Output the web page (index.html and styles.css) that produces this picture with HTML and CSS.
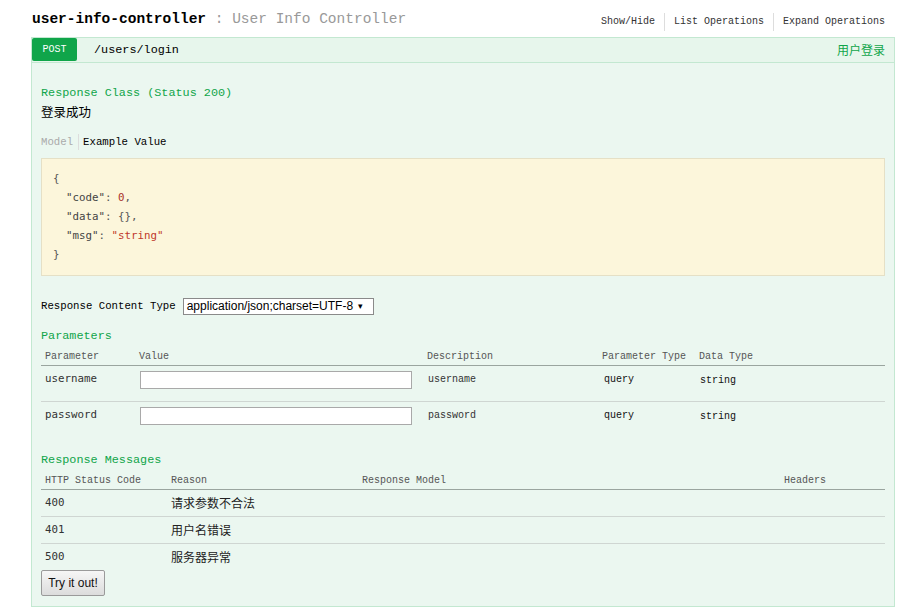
FILE: index.html
```html
<!DOCTYPE html>
<html lang="zh">
<head>
<meta charset="utf-8">
<title>user-info-controller</title>
<link rel="stylesheet" href="styles.css">
</head>
<body>
<div class="resource">
  <div class="res-heading">
    <h2 class="res-title"><span class="res-name">user-info-controller</span><span class="res-desc"> : User Info Controller</span></h2>
    <ul class="options">
      <li>Show/Hide</li>
      <li>List Operations</li>
      <li>Expand Operations</li>
    </ul>
  </div>
  <div class="operation">
    <div class="op-heading">
      <span class="method">POST</span>
      <span class="path">/users/login</span>
      <span class="summary">用户登录</span>
    </div>
    <div class="op-content">
      <h4 class="sect first">Response Class (Status 200)</h4>
      <div class="resp-desc">登录成功</div>
      <ul class="sig-nav">
        <li class="nav-model">Model</li>
        <li class="nav-example">Example Value</li>
      </ul>
      <pre class="snippet"><span class="p">{</span>
  <span class="k">"code"</span><span class="p">:</span> <span class="n">0</span><span class="p">,</span>
  <span class="k">"data"</span><span class="p">: {},</span>
  <span class="k">"msg"</span><span class="p">:</span> <span class="s">"string"</span>
<span class="p">}</span></pre>
      <div class="content-type">
        <span class="ct-label">Response Content Type</span>
        <span class="select">application/json;charset=UTF-8<span class="arrow">▾</span></span>
      </div>
      <h4 class="sect">Parameters</h4>
      <table class="tbl params">
        <colgroup><col class="c1"><col class="c2"><col class="c3"><col class="c4"><col class="c5"></colgroup>
        <thead>
          <tr><th>Parameter</th><th>Value</th><th>Description</th><th>Parameter Type</th><th>Data Type</th></tr>
        </thead>
        <tbody>
          <tr><td class="code">username</td><td><input class="inp" type="text"></td><td>username</td><td class="dark">query</td><td class="dark">string</td></tr>
          <tr><td class="code">password</td><td><input class="inp" type="text"></td><td>password</td><td class="dark">query</td><td class="dark">string</td></tr>
        </tbody>
      </table>
      <h4 class="sect msgs-title">Response Messages</h4>
      <table class="tbl msgs">
        <colgroup><col class="m1"><col class="m2"><col class="m3"><col class="m4"></colgroup>
        <thead>
          <tr><th>HTTP Status Code</th><th>Reason</th><th>Response Model</th><th>Headers</th></tr>
        </thead>
        <tbody>
          <tr><td class="code">400</td><td class="cjk">请求参数不合法</td><td></td><td></td></tr>
          <tr><td class="code">401</td><td class="cjk">用户名错误</td><td></td><td></td></tr>
          <tr><td class="code">500</td><td class="cjk">服务器异常</td><td></td><td></td></tr>
        </tbody>
      </table>
      <button class="try" type="button">Try it out!</button>
    </div>
  </div>
</div>
</body>
</html>
```
FILE: styles.css
```css
html, body {
  margin: 0;
  padding: 0;
  background: #ffffff;
}
body {
  font-family: "Liberation Mono", "Noto Sans CJK SC", monospace;
  color: #000;
}
ul { list-style: none; margin: 0; padding: 0; }

.resource {
  margin-left: 31px;
  width: 864px;
}

.res-heading {
  height: 37px;
  display: flex;
  align-items: center;
  justify-content: space-between;
  padding: 0 10px 0 1px;
  box-sizing: border-box;
}
.res-title {
  margin: 0;
  font-size: 14.5px;
  line-height: 18px;
  font-weight: normal;
  padding-top: 1px;
}
.res-name { font-weight: bold; color: #000; }
.res-desc { color: #999; }

.options {
  display: flex;
  align-items: center;
  padding-top: 6px;
}
.options li {
  font-size: 10px;
  line-height: 18px;
  color: #333;
  padding: 0 9px;
  border-left: 1px solid #ddd;
}
.options li:first-child { border-left: none; }
.options li:last-child { padding-right: 0; }

.operation {
  border: 1px solid #c3e8d1;
  background: #ebf7f0;
}
.op-heading {
  display: flex;
  align-items: flex-start;
  height: 24px;
  background: #e7f6ec;
  border-bottom: 1px solid #c3e8d1;
  padding-right: 9px;
}
.method {
  width: 45px;
  height: 23px;
  background: #10a54a;
  color: #fff;
  font-size: 10px;
  line-height: 23px;
  text-align: center;
  border-radius: 2px;
}
.path {
  margin-left: 17px;
  font-size: 11.8px;
  line-height: 24px;
  color: #000;
}
.summary {
  margin-left: auto;
  font-family: "Noto Sans CJK SC", sans-serif;
  font-size: 12px;
  line-height: 24px;
  color: #10a54a;
}

.op-content {
  padding: 22px 9px 10px;
}
.sect {
  margin: 13px 0 0;
  font-size: 11.8px;
  line-height: 16px;
  font-weight: normal;
  color: #10a54a;
}
.sect.first { margin-top: 0; }
.sect.msgs-title { margin-top: 15px; }
.resp-desc {
  margin-top: 2px;
  font-family: "Noto Sans CJK SC", sans-serif;
  font-size: 12.5px;
  line-height: 18px;
  color: #000;
}
.sig-nav {
  display: flex;
  margin-top: 13px;
  font-size: 10.7px;
  line-height: 16px;
}
.nav-model {
  color: #aaa;
  padding-right: 5px;
  border-right: 1px solid #ddd;
}
.nav-example {
  color: #000;
  padding-left: 4px;
}
.snippet {
  margin: 8px 0 0;
  background: #fcf6db;
  border: 1px solid #e5e0c6;
  padding: 10px 11px 11px;
  font-family: "DejaVu Sans Mono", monospace;
  font-size: 10.8px;
  line-height: 19px;
  color: #555;
}
.snippet .k { color: #444; }
.snippet .p { color: #555; }
.snippet .n { color: #a8332b; }
.snippet .s { color: #c0392b; }

.content-type {
  margin-top: 22px;
  display: flex;
  align-items: center;
  height: 17px;
}
.ct-label {
  font-size: 10.7px;
  line-height: 17px;
  color: #000;
}
.select {
  margin-left: 7px;
  width: 191px;
  height: 17px;
  box-sizing: border-box;
  border: 1px solid #8a8a8a;
  background: #fff;
  font-family: "Liberation Sans", Arial, sans-serif;
  font-size: 12px;
  line-height: 15px;
  padding-left: 3px;
  display: flex;
  align-items: center;
  color: #000;
}
.select .arrow {
  margin-left: 5px;
  font-size: 9px;
}

.tbl {
  margin-top: 2px;
  width: 100%;
  border-collapse: collapse;
  table-layout: fixed;
}
.tbl th {
  text-align: left;
  font-weight: normal;
  font-size: 10px;
  line-height: 14px;
  color: #555;
  padding: 4px 4px 1px 4px;
  border-bottom: 1px solid #9aa59f;
}
.tbl td {
  font-size: 10px;
  line-height: 16px;
  color: #333;
  vertical-align: top;
}
.params .c1 { width: 96px; }
.params .c2 { width: 286px; }
.params .c3 { width: 175px; }
.params .c4 { width: 97px; }
.params th:nth-child(2) { padding-left: 2px; }
.params td {
  padding: 6px 4px 11px;
  border-bottom: 1px solid #cfd6d2;
}
.params td:nth-child(1) { padding-top: 5px; }
.params td:nth-child(2) { padding-left: 3px; padding-top: 5px; padding-bottom: 12px; }
.params td:nth-child(3) { padding-left: 5px; }
.params td:nth-child(4) { padding-left: 6px; }
.params td:nth-child(5) { padding-left: 5px; padding-top: 7px; padding-bottom: 10px; }
.params tbody tr:last-child td { border-bottom: none; }
.tbl td.code {
  font-family: "DejaVu Sans Mono", monospace;
  font-size: 10.8px;
  color: #333;
}
.tbl td.dark { color: #111; }
.inp {
  display: block;
  width: 272px;
  height: 18px;
  box-sizing: border-box;
  margin: 0;
  border: 1px solid #a9a9a9;
  background: #fff;
  padding: 0 2px;
}

.msgs .m1 { width: 126px; }
.msgs .m2 { width: 191px; }
.msgs .m3 { width: 422px; }
.msgs td {
  padding: 5px 4px 5px;
  border-bottom: 1px solid #cfd6d2;
}
.msgs tbody tr:last-child td { border-bottom: none; }
.tbl td.cjk {
  font-family: "Noto Sans CJK SC", sans-serif;
  font-size: 12px;
  color: #222;
}

.try {
  display: block;
  width: 64px;
  height: 26px;
  margin: 0;
  padding: 0;
  border: 1px solid #9a9a9a;
  border-radius: 2px;
  background: linear-gradient(#f6f6f6, #dcdcdc);
  font-family: "Liberation Sans", Arial, sans-serif;
  font-size: 12px;
  color: #111;
}
```
